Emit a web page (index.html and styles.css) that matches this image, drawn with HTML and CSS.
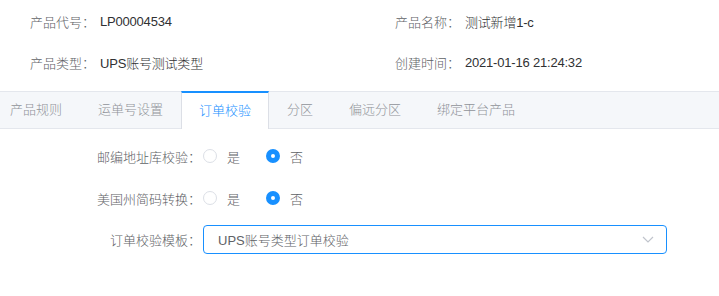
FILE: index.html
```html
<!DOCTYPE html>
<html lang="zh-CN">
  <head>
    <meta charset="UTF-8" />
    <title>产品详情</title>
    <link rel="stylesheet" href="styles.css">
  </head>
  <body>
    <div class="info">
      <div class="info-item">
        <span class="info-label">产品代号：</span>
        <span class="info-value">LP00004534</span>
      </div>
      <div class="info-item">
        <span class="info-label">产品名称：</span>
        <span class="info-value">测试新增1-c</span>
      </div>
      <div class="info-item">
        <span class="info-label">产品类型：</span>
        <span class="info-value">UPS账号测试类型</span>
      </div>
      <div class="info-item">
        <span class="info-label">创建时间：</span>
        <span class="info-value">2021-01-16 21:24:32</span>
      </div>
    </div>

    <div class="tabs">
      <div class="tab">产品规则</div>
      <div class="tab">运单号设置</div>
      <div class="tab tab-active">订单校验</div>
      <div class="tab">分区</div>
      <div class="tab">偏远分区</div>
      <div class="tab">绑定平台产品</div>
    </div>

    <div class="form">
      <div class="form-row">
        <label class="form-label">邮编地址库校验：</label>
        <div class="radio-group">
          <span class="radio"><span class="radio-dot"></span>是</span>
          <span class="radio radio-checked"><span class="radio-dot"></span>否</span>
        </div>
      </div>
      <div class="form-row">
        <label class="form-label">美国州简码转换：</label>
        <div class="radio-group">
          <span class="radio"><span class="radio-dot"></span>是</span>
          <span class="radio radio-checked"><span class="radio-dot"></span>否</span>
        </div>
      </div>
      <div class="form-row form-row-last">
        <label class="form-label">订单校验模板：</label>
        <div class="select">
          <span>UPS账号类型订单校验</span>
          <svg class="select-arrow" width="12" height="7" viewBox="0 0 12 7">
            <path d="M1 1 L6 6 L11 1" fill="none" stroke="#c0c4cc" stroke-width="1.2" />
          </svg>
        </div>
      </div>
    </div>
  </body>
</html>
```

FILE: styles.css
```css
body {
  margin: 0;
  padding: 0;
  font-family: "Liberation Sans", "Noto Sans CJK SC", sans-serif;
  font-size: 13px;
  font-weight: 300;
  color: #303133;
  background: #fff;
}

.info {
  display: grid;
  grid-template-columns: 365px 1fr;
  padding: 1px 0 0 30px;
}

.info-item {
  display: flex;
  align-items: center;
  height: 41px;
}

.info-label {
  width: 70px;
  color: #606266;
}

.info-value {
  color: #303133;
  letter-spacing: -0.2px;
}

.tabs {
  display: flex;
  margin-top: 8px;
  height: 36px;
  background: #f5f7fa;
  border-top: 1px solid #e4e7ed;
  border-bottom: 1px solid #e4e7ed;
}

.tab {
  padding: 0 17px;
  line-height: 36px;
  color: #909399;
  border-left: 1px solid transparent;
  border-right: 1px solid transparent;
}

.tab:first-child {
  padding-left: 10px;
  border-left: 0;
}

.tab-active {
  margin-top: -1px;
  margin-bottom: -1px;
  height: 36px;
  line-height: 35px;
  background: #fff;
  color: #1890ff;
  border-top: 2px solid #1890ff;
  border-left-color: #dcdfe6;
  border-right-color: #dcdfe6;
}

.form {
  padding-top: 6px;
}

.form-row {
  display: flex;
  align-items: center;
  height: 42px;
}

.form-row-last {
  height: 41px;
}

.form-label {
  width: 201px;
  text-align: right;
  color: #606266;
  margin-right: 2px;
}

.radio-group {
  display: flex;
  align-items: center;
}

.radio {
  display: flex;
  align-items: center;
  margin-right: 26px;
  color: #606266;
}

.radio-dot {
  box-sizing: border-box;
  width: 14px;
  height: 14px;
  margin-right: 10px;
  border: 1px solid #dcdfe6;
  border-radius: 50%;
  background: #fff;
}

.radio-checked .radio-dot {
  border: 5px solid #1890ff;
  background: #fff;
}

.select {
  box-sizing: border-box;
  display: flex;
  align-items: center;
  justify-content: space-between;
  width: 464px;
  height: 29px;
  padding: 0 12px 0 14px;
  border: 1px solid #1890ff;
  border-radius: 4px;
  color: #606266;
}

.select-arrow {
  display: block;
}
```
